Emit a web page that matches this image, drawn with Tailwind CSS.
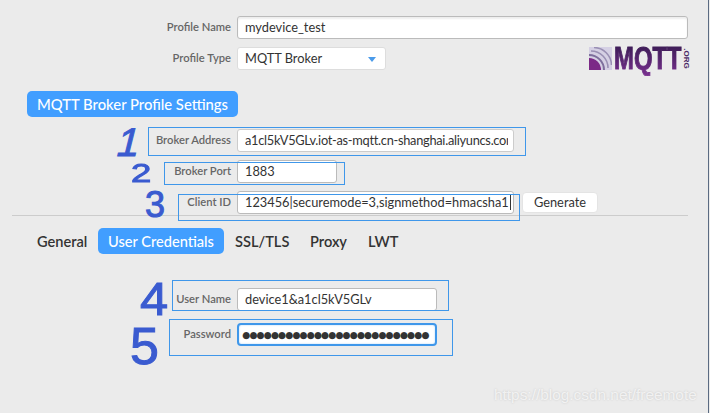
<!DOCTYPE html>
<html lang="en">
<head>
  <meta charset="UTF-8" />
  <title>MQTT Broker Profile Settings</title>
  <script src="https://cdn.jsdelivr.net/npm/@tailwindcss/browser@4"></script>
</head>
<body class="m-0 bg-[#ebebeb] font-['Lato','Noto_Sans',sans-serif] overflow-hidden">
  <div class="relative w-[710px] h-[413px] overflow-hidden">
    <div class="w-[709px] h-[413px] border-r border-r-[#5b6b82] pt-4">

      <!-- profile -->
      <div class="flex items-center h-[23px]">
        <div class="w-[231px] mb-px text-right text-[11.2px] font-semibold text-[#666]">Profile Name</div>
        <div class="ml-1.5 w-[451px] h-[23px] pl-[7px] leading-[21px] text-[12.8px] text-[#333] bg-white border border-[#bbb] rounded-[3px] shadow-[inset_0_2px_2px_#eee]">mydevice_test</div>
      </div>
      <div class="flex items-center h-[23px] mt-2">
        <div class="w-[231px] mb-px text-right text-[11.2px] font-semibold text-[#666]">Profile Type</div>
        <div class="relative ml-1.5 w-[149px] h-[23px] pl-[7px] leading-[21px] text-[12.8px] text-[#333] bg-white border border-[#ddd] rounded-[3px]">
          MQTT Broker
          <div class="absolute right-[9px] top-[9px] w-0 h-0 border-x-[4px] border-x-transparent border-t-[5px] border-t-[#4a9bea]"></div>
        </div>
        <!-- logo -->
        <div class="ml-[203px] w-[99px] h-[23px] flex">
          <svg width="23" height="23" viewBox="0 0 23 23" class="shrink-0">
            <rect width="23" height="23" fill="#d5d0e4"/>
            <g fill="none" stroke="#9a90b4" stroke-width="1.6">
              <path d="M5 0.5 A 18 18 0 0 1 22.5 18"/>
              <path d="M2 4 A 17 17 0 0 1 19 21"/>
            </g>
            <g fill="none" stroke="#7d6f9c" stroke-width="2">
              <path d="M0 8 A 15 15 0 0 1 15 23"/>
            </g>
            <path d="M0 11 A 12 12 0 0 1 12 23 L0 23 Z" fill="#7c2a87"/>
          </svg>
          <div class="relative flex-1">
            <div class="absolute left-[2px] top-[-5px] origin-left scale-x-[.77] font-['Liberation_Sans'] font-bold text-[31px] leading-[34px] bg-linear-to-b from-[#35194f] to-[#7a3190] bg-clip-text text-transparent [-webkit-text-stroke:1px_transparent]">MQTT</div>
            <div class="absolute right-[-8px] top-[7px] rotate-90 font-['Liberation_Sans'] font-bold text-[8px] leading-[9px] text-[#4b2a66]">.ORG</div>
          </div>
        </div>
      </div>

      <!-- broker settings -->
      <div class="ml-[27px] mt-[21px] w-[211px] h-[26px] flex items-center justify-center bg-[#419eff] rounded-[5px] text-white text-[14.8px] font-medium">MQTT Broker Profile Settings</div>

      <div class="flex items-center h-[23px] mt-3">
        <div class="w-[231px] mb-px text-right text-[11.2px] font-semibold text-[#666]">Broker Address</div>
        <div class="ml-1.5 w-[277px] h-[23px] pl-[7px] leading-[21px] text-[12.8px] tracking-[-0.28px] text-[#333] bg-white border border-[#ccc] rounded-[3px]">
          <div class="w-[263px] overflow-hidden whitespace-nowrap">a1cl5kV5GLv.iot-as-mqtt.cn-shanghai.aliyuncs.com</div>
        </div>
      </div>
      <div class="flex items-center h-[23px] mt-2">
        <div class="w-[231px] mb-px text-right text-[11.2px] font-semibold text-[#666]">Broker Port</div>
        <div class="ml-1.5 w-[100px] h-[23px] pl-[7px] leading-[21px] text-[12.8px] text-[#333] bg-white border border-[#bbb] rounded-[3px]">1883</div>
      </div>
      <div class="flex items-center h-[23px] mt-2">
        <div class="w-[231px] mb-px text-right text-[11.2px] font-semibold text-[#666]">Client ID</div>
        <div class="ml-1.5 w-[277px] h-[23px] pl-[7px] leading-[21px] text-[12.8px] text-[#333] bg-white border border-[#bbb] rounded-[3px] whitespace-nowrap overflow-hidden">123456|securemode=3,signmethod=hmacsha1<span class="border-l border-[#333] ml-px"></span></div>
        <div class="ml-2 w-[76px] h-[21px] flex items-center justify-center text-[12.8px] text-[#333] bg-white rounded-[4px] border border-[#e4e4e4]">Generate</div>
      </div>

      <div class="ml-3 mt-px w-[676px] border-t border-[#ccc]"></div>

      <!-- tabs -->
      <div class="flex items-center h-[26px] mt-3 text-[14.6px] font-semibold text-[#333]">
        <div class="ml-[37px] w-[50px] pt-0.5">General</div>
        <div class="ml-[11px] w-[126px] h-[26px] pt-0.5 flex items-center justify-center bg-[#419eff] rounded-[5px] text-white font-medium">User Credentials</div>
        <div class="ml-[11px] w-[54px] pt-0.5">SSL/TLS</div>
        <div class="ml-[21px] w-[37px] pt-0.5">Proxy</div>
        <div class="ml-[21px] pt-0.5">LWT</div>
      </div>

      <!-- credentials -->
      <div class="flex items-center h-[23px] mt-[34px]">
        <div class="w-[231px] mb-px text-right text-[11.2px] font-semibold text-[#666]">User Name</div>
        <div class="ml-1.5 w-[200px] h-[23px] pl-[7px] leading-[21px] text-[12.8px] text-[#333] bg-white border border-[#bbb] rounded-[3px]">device1&amp;a1cl5kV5GLv</div>
      </div>
      <div class="flex items-center h-[23px] mt-3">
        <div class="w-[231px] mb-px text-right text-[11.2px] font-semibold text-[#666]">Password</div>
        <div class="ml-1.5 w-[200px] h-[23px] pl-[3px] leading-[20px] font-['DejaVu_Sans'] text-[9.2px] tracking-[-0.85px] text-[#333] bg-white border-2 border-[#3f97ea] rounded-[4px] shadow-[inset_0_0_2px_#a9d2f7] whitespace-nowrap">●●●●●●●●●●●●●●●●●●●●●●●●●●</div>
      </div>
    </div>

    <!-- annotation boxes -->
    <div class="absolute left-[148px] top-[127px] w-[378px] h-[29px] border border-[#3f97ea]"></div>
    <div class="absolute left-[164px] top-[162px] w-[181px] h-[23px] border border-[#3f97ea]"></div>
    <div class="absolute left-[178px] top-[194px] w-[342px] h-[27px] border border-[#3f97ea]"></div>
    <div class="absolute left-[172px] top-[280px] w-[277px] h-[31px] border border-[#3f97ea]"></div>
    <div class="absolute left-[169px] top-[319px] w-[284px] h-[37px] border border-[#3f97ea]"></div>

    <!-- handwritten numbers -->
    <div class="absolute left-[118px] top-[122px] text-[#3a5bd0] font-['Liberation_Sans'] text-[40px] leading-[40px] skew-x-[-14deg] [-webkit-text-stroke:1px_#3a5bd0]">1</div>
    <div class="absolute left-[131px] top-[160px] origin-left scale-x-[1.4] text-[#3a5bd0] font-['Liberation_Sans'] text-[26px] leading-[26px] [-webkit-text-stroke:1px_#3a5bd0]">2</div>
    <div class="absolute left-[145px] top-[187px] text-[#3a5bd0] font-['Liberation_Sans'] text-[36px] leading-[36px] [-webkit-text-stroke:1px_#3a5bd0]">3</div>
    <div class="absolute left-[140px] top-[279px] origin-left scale-x-[1.1] text-[#3a5bd0] font-['Liberation_Sans'] text-[46px] leading-[40px] [-webkit-text-stroke:1px_#3a5bd0]">4</div>
    <div class="absolute left-[130px] top-[325px] text-[#3a5bd0] font-['Liberation_Sans'] text-[52px] leading-[42px] [-webkit-text-stroke:1px_#3a5bd0]">5</div>

    <!-- watermark -->
    <div class="absolute left-[494px] top-[385px] font-['Liberation_Sans'] text-[15.4px] leading-[20px] text-white/70 [text-shadow:0_0_2px_#c4c4c4] whitespace-nowrap">https://blog.csdn.net/freemote</div>
  </div>
</body>
</html>
